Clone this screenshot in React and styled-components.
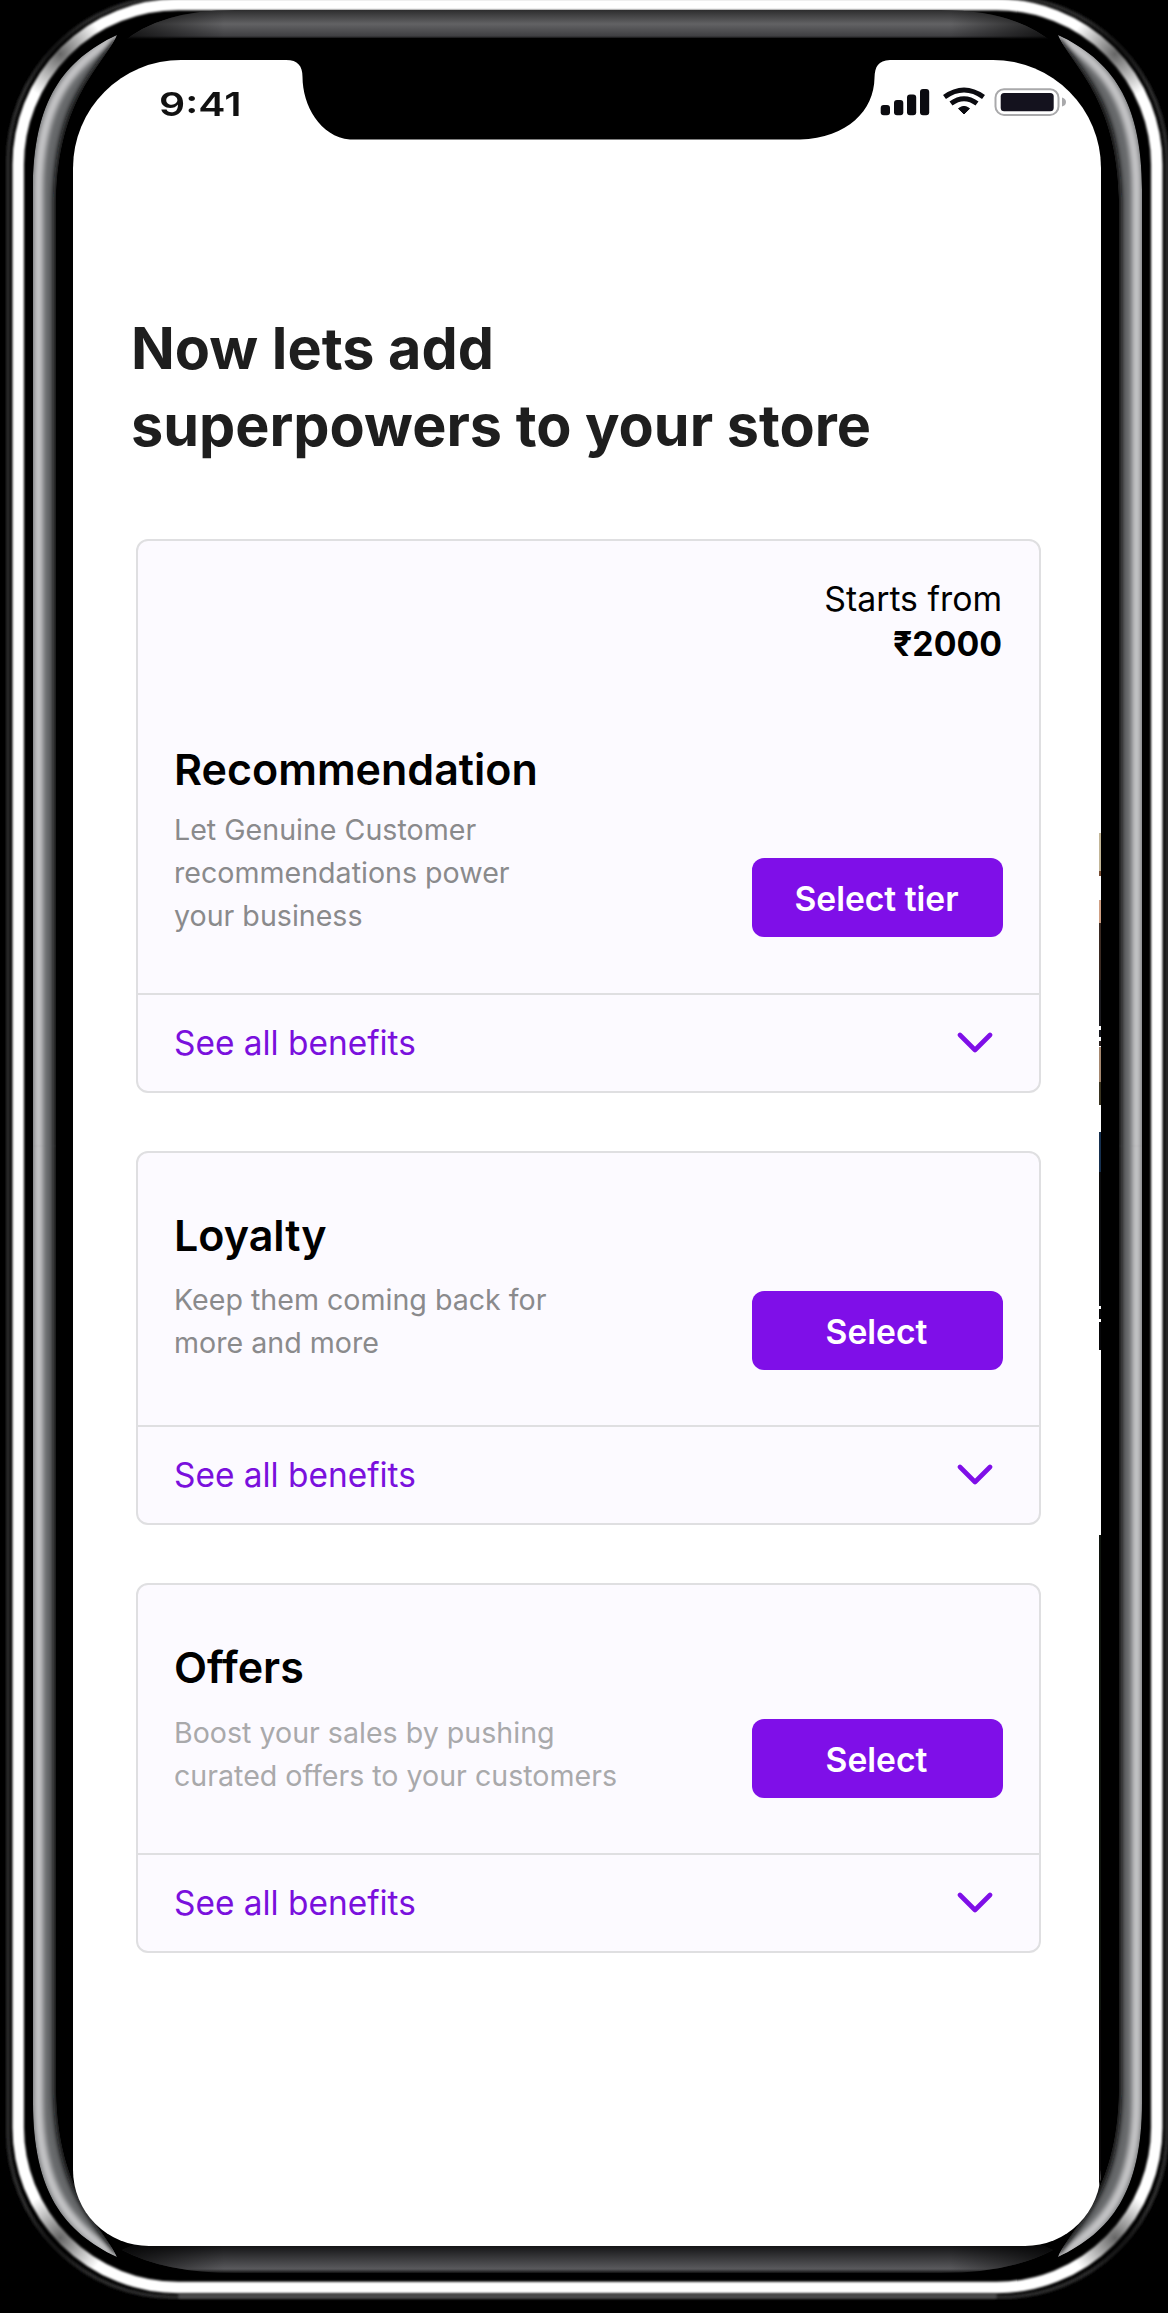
import React from "react";
import styled, { createGlobalStyle } from "styled-components";

const GlobalStyle = createGlobalStyle`
  * { box-sizing: border-box; }
  body { margin: 0; background: #000; }
`;

const Stage = styled.main`
  position: relative;
  width: 1168px;
  height: 2313px;
  padding: 60px 0 0 73px;
  overflow: hidden;
  background: #000;
  font-family: Inter, "Liberation Sans", sans-serif;
`;

const FrameArt = styled.svg`
  position: absolute;
  inset: 0;
`;

const Screen = styled.div`
  position: relative;
  width: 1028px;
  height: 2186px;
  overflow: hidden;
  background: #fff;
  border-radius: 108px 108px 76px 76px / 108px 108px 76px 76px;
`;

const NotchArt = styled.svg`
  position: absolute;
  left: 207px;
  top: 0;
`;

const EdgeArt = styled.svg`
  position: absolute;
  right: 0;
  top: 0;
`;

const StatusBar = styled.div`
  display: flex;
  justify-content: space-between;
  height: 107px;
  padding: 26px 35px 0 86px;
`;

const Clock = styled.span`
  display: block;
  height: 32px;
  margin-top: 2px;
  font-size: 32.5px;
  font-weight: 600;
  line-height: 33px;
  color: #111;
  transform: scaleX(1.26);
  transform-origin: left;
`;

const Content = styled.div`
  padding: 143px 60px 0 63px;
`;

const Title = styled.h1`
  margin: 0 0 75px -5px;
  font-size: 57.5px;
  line-height: 77px;
  font-weight: 700;
  color: #1e1e1e;
  white-space: pre-line;
`;

const CardList = styled.div`
  display: flex;
  flex-direction: column;
  gap: 58px;
`;

const Card = styled.section`
  border: 2px solid #dfdfe1;
  border-radius: 12px;
  background: #fcfaff;
`;

const CardBody = styled.div`
  display: flex;
  flex-direction: column;
  height: ${(p) => p.$height}px;
  padding: ${(p) => p.$top}px 36px 0;
`;

const Price = styled.div`
  height: 166px;
  padding-right: 1px;
  text-align: right;
  font-size: 33.8px;
  line-height: 45px;
  color: #000;
  strong { display: block; font-weight: 700; }
`;

const Offer = styled.div`
  display: flex;
  justify-content: space-between;
  align-items: flex-start;
`;

const CardTitle = styled.h2`
  margin: 0 0 ${(p) => p.$gap}px;
  font-size: 43px;
  line-height: 54px;
  font-weight: 600;
  color: #000;
`;

const Description = styled.p`
  margin: 0;
  font-size: 28.6px;
  line-height: 43.2px;
  color: ${(p) => p.$color};
  white-space: pre-line;
`;

const SelectButton = styled.button`
  width: 251px;
  height: 79px;
  margin: ${(p) => p.$top}px 0 0;
  padding: 2px 2px 0 0;
  border: 0;
  border-radius: 12px;
  background: #7f0fe8;
  color: #fff;
  font: 600 33.6px Inter, "Liberation Sans", sans-serif;
`;

const Benefits = styled.div`
  display: flex;
  justify-content: space-between;
  align-items: center;
  height: 98px;
  padding: 0 46px 0 36px;
  border-top: 2px solid #dfdfe1;
  font-size: 33.4px;
  color: #7a10dd;
`;

const Chevron = () => (
  <svg width="36" height="22" viewBox="0 0 36 22" fill="none">
    <path d="M3 3 18 18 33 3" stroke="#7f0fe8" strokeWidth="4.6" strokeLinecap="round" strokeLinejoin="round" />
  </svg>
);

const StatusIcons = () => (
  <svg width="188" height="32" viewBox="878 86 188 32" fill="none">
    <g fill="#0b0b10">
      <rect x="880.7" y="105" width="9.3" height="10.3" rx="3" />
      <rect x="894" y="100" width="9.3" height="15.3" rx="3" />
      <rect x="907" y="94.5" width="9.2" height="20.8" rx="3" />
      <rect x="920" y="89" width="9.2" height="26.3" rx="3" />
      <path d="M958.500 108.600Q964 104.200 969.500 108.600L964 114Z" strokeLinejoin="round" stroke="#0b0b10" strokeWidth="1" />
    </g>
    <path d="M944.5 97Q964 83 983.500 97M951 103.600Q964 94 977 103.600" stroke="#0b0b10" strokeWidth="5" />
    <rect x="995.5" y="89.300" width="63" height="25.6" rx="8.500" stroke="#a9a9ab" strokeWidth="2" />
    <rect x="1000.7" y="93" width="53" height="18.200" rx="3.500" fill="#14121e" />
    <path d="M1062 97.500q4 1 4 4.500t-4 4.500z" fill="#a9a9ab" />
  </svg>
);

const sideBand = "M33 1146V190C33 100 64 60 117 35C103 66 58 98 56 200V1146Z";
const sideEdge = "M38.500 1150V190C38.500 105 68 66 117 36";
const sideShade = "M57 1150V200C59 115 83 87 118 41";

const Quarter = ({ transform }) => (
  <g transform={transform} clipPath="url(#band)">
    <path d={sideBand} fill="#66686a" />
    <path d={sideEdge} stroke="#c4c4c6" strokeWidth="9.500" fill="none" filter="url(#soft)" />
    <path d={sideShade} stroke="#08090a" strokeWidth="8" fill="none" filter="url(#soft)" />
  </g>
);

const PhoneFrame = () => (
  <FrameArt width="1168" height="2313" viewBox="0 0 1168 2313" fill="none">
    <defs>
      <clipPath id="band"><path d={sideBand} /></clipPath>
      <filter id="soft" x="-40" y="-40" width="1250" height="2400" filterUnits="userSpaceOnUse"><feGaussianBlur stdDeviation="2.4" /></filter>
      <filter id="fine" x="-40" y="-40" width="1250" height="2400" filterUnits="userSpaceOnUse"><feGaussianBlur stdDeviation="1" /></filter>
      <linearGradient id="top" x1="0" y1="9" x2="0" y2="39" gradientUnits="userSpaceOnUse">
        <stop stopColor="#29292a" /><stop offset=".5" stopColor="#626264" /><stop offset=".9" stopColor="#3f3f42" /><stop offset="1" stopColor="#000" />
      </linearGradient>
      <linearGradient id="bottom" x1="0" y1="2246" x2="0" y2="2273" gradientUnits="userSpaceOnUse">
        <stop stopColor="#141416" /><stop offset=".85" stopColor="#5a5a5d" /><stop offset="1" stopColor="#101010" />
      </linearGradient>
      <linearGradient id="fade" x1="110" y1="0" x2="1065" y2="0" gradientUnits="userSpaceOnUse">
        <stop stopColor="#000" stopOpacity=".8" /><stop offset=".12" stopColor="#000" stopOpacity="0" /><stop offset=".88" stopColor="#000" stopOpacity="0" /><stop offset="1" stopColor="#000" stopOpacity=".8" />
      </linearGradient>
      <radialGradient id="dim"><stop stopColor="#000" stopOpacity=".6" /><stop offset="1" stopColor="#000" stopOpacity="0" /></radialGradient>
    </defs>
    <rect x="8" y="-3" width="1159" height="2300" rx="165" stroke="#2b2b2c" strokeWidth="4" filter="url(#fine)" />
    <path d="M180 2296.500H995" stroke="#505051" strokeWidth="4" strokeLinecap="round" filter="url(#fine)" />
    <rect x="18.200" y="4.500" width="1138.600" height="2283" rx="160" stroke="#fff" strokeWidth="11.500" filter="url(#fine)" />
    <circle cx="60" cy="54" r="46" fill="url(#dim)" />
    <circle cx="1115" cy="54" r="46" fill="url(#dim)" />
    <circle cx="60" cy="2238" r="46" fill="url(#dim)" />
    <circle cx="1115" cy="2238" r="46" fill="url(#dim)" />
    <Quarter />
    <Quarter transform="translate(1175 0) scale(-1 1)" />
    <Quarter transform="translate(0 2292) scale(1 -1)" />
    <Quarter transform="translate(1175 2292) scale(-1 -1)" />
    <path d="M122 43Q160 10 235 10H940Q1015 10 1053 43Q1015 38 980 38H195Q160 38 122 43Z" fill="url(#top)" />
    <path d="M122 43Q160 10 235 10H940Q1015 10 1053 43Q1015 38 980 38H195Q160 38 122 43Z" fill="url(#fade)" />
    <path d="M122 2250L145 2240H1030L1053 2250Q1010 2273 940 2273H235Q165 2273 122 2250Z" fill="url(#bottom)" />
    <path d="M122 2250L145 2240H1030L1053 2250Q1010 2273 940 2273H235Q165 2273 122 2250Z" fill="url(#fade)" />
  </FrameArt>
);

const Notch = () => (
  <NotchArt width="620" height="82" viewBox="280 60 620 82">
    <path d="M286 60C298 60 302.500 66 302.500 77C302.500 105 320 137 350 139.500H800C848 138 874 110 874.500 78C875 66 878 61 890 60Z" fill="#000" />
  </NotchArt>
);

const edgeMarks = [
  [833, 38, "#c3b697"], [871, 5, "#7a4f34"], [900, 23, "#cf9f83"], [923, 57, "#3b2a22"],
  [980, 46, "#1d1c20"], [1030, 7, "#15161c"], [1041, 5, "#2a211f"], [1047, 35, "#a5876f"],
  [1082, 23, "#3a3420"], [1132, 40, "#16304f"], [1172, 134, "#0d0e10"], [1309, 10, "#08080a"],
  [1322, 28, "#08080a"], [1535, 475, "#10150f"], [2010, 236, "#0a0809"],
];

const EdgeMarks = () => (
  <EdgeArt width="2" height="2186" viewBox="0 60 2 2186">
    {edgeMarks.map(([y, h, fill]) => (
      <rect key={y} y={y} width="2" height={h} fill={fill} />
    ))}
  </EdgeArt>
);

const plans = [
  { name: "Recommendation", text: "Let Genuine Customer\nrecommendations power\nyour business", color: "#8a8a8c", price: "₹2000", action: "Select tier", height: 452, padTop: 35, gap: 12, top: 116 },
  { name: "Loyalty", text: "Keep them coming back for\nmore and more", color: "#8a8a8c", action: "Select", height: 272, padTop: 55, gap: 16, top: 83 },
  { name: "Offers", text: "Boost your sales by pushing\ncurated offers to your customers", color: "#a9a9ab", action: "Select", height: 268, padTop: 55, gap: 17, top: 79 },
];

export default function App() {
  return (
    <>
      <GlobalStyle />
      <Stage>
        <PhoneFrame />
        <Screen>
          <Notch />
          <EdgeMarks />
          <StatusBar>
            <Clock>9:41</Clock>
            <StatusIcons />
          </StatusBar>
          <Content>
            <Title>{"Now lets add\nsuperpowers to your store"}</Title>
            <CardList>
              {plans.map((plan) => (
                <Card key={plan.name}>
                  <CardBody $height={plan.height} $top={plan.padTop}>
                    {plan.price && (
                      <Price>Starts from<strong>{plan.price}</strong></Price>
                    )}
                    <Offer>
                      <div>
                        <CardTitle $gap={plan.gap}>{plan.name}</CardTitle>
                        <Description $color={plan.color}>{plan.text}</Description>
                      </div>
                      <SelectButton $top={plan.top}>{plan.action}</SelectButton>
                    </Offer>
                  </CardBody>
                  <Benefits>
                    See all benefits
                    <Chevron />
                  </Benefits>
                </Card>
              ))}
            </CardList>
          </Content>
        </Screen>
      </Stage>
    </>
  );
}
